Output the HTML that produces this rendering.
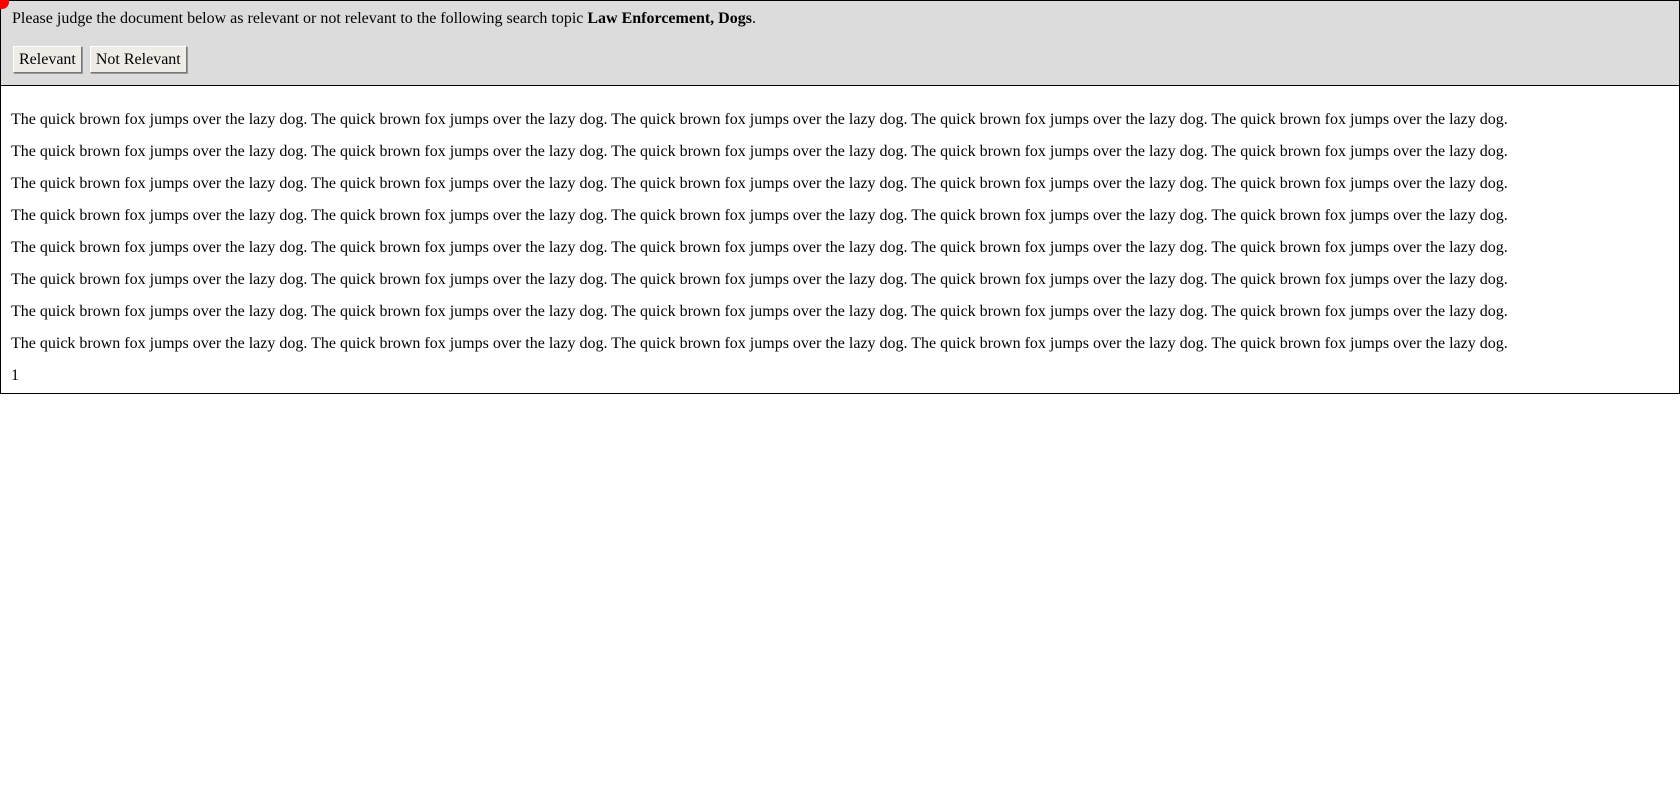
<!DOCTYPE html>
<html><head><meta charset="utf-8"><style>
body{margin:0;width:1680px;height:795px;background:#fff;font-family:"Liberation Serif",serif;font-size:16px;color:#000;position:relative;overflow:hidden}
#hd{position:absolute;left:0;top:0;width:1678px;height:84px;background:#dcdcdc;border:1px solid #000}
#dot{position:absolute;left:-6px;top:-6px;width:14px;height:14px;border-radius:50%;background:#f00}
.t{position:absolute;left:11px;white-space:nowrap;line-height:20px}
#btns{position:absolute;left:12px;top:45px;display:flex;gap:8px}
.b{height:27px;background:#efece7;border:1px solid #fff;border-right-color:#777;border-bottom-color:#777;box-shadow:1px 1px 0 #999;font:16px "Liberation Serif",serif;line-height:25px;padding:0 5px;box-sizing:border-box}
#bd{position:absolute;left:0;top:85px;width:1678px;height:308px;border:1px solid #000;border-top:none}
</style></head><body>
<div id="hd"><div id="dot"></div>
<div class="t" style="top:8px">Please judge the document below as relevant or not relevant to the following search topic <b>Law Enforcement, Dogs</b>.</div>
<div id="btns"><div class="b">Relevant</div><div class="b">Not Relevant</div></div>
</div>
<div id="bd"></div>
<div class="t" style="top:110px">The quick brown fox jumps over the lazy dog. The quick brown fox jumps over the lazy dog. The quick brown fox jumps over the lazy dog. The quick brown fox jumps over the lazy dog. The quick brown fox jumps over the lazy dog.</div>
<div class="t" style="top:142px">The quick brown fox jumps over the lazy dog. The quick brown fox jumps over the lazy dog. The quick brown fox jumps over the lazy dog. The quick brown fox jumps over the lazy dog. The quick brown fox jumps over the lazy dog.</div>
<div class="t" style="top:174px">The quick brown fox jumps over the lazy dog. The quick brown fox jumps over the lazy dog. The quick brown fox jumps over the lazy dog. The quick brown fox jumps over the lazy dog. The quick brown fox jumps over the lazy dog.</div>
<div class="t" style="top:206px">The quick brown fox jumps over the lazy dog. The quick brown fox jumps over the lazy dog. The quick brown fox jumps over the lazy dog. The quick brown fox jumps over the lazy dog. The quick brown fox jumps over the lazy dog.</div>
<div class="t" style="top:238px">The quick brown fox jumps over the lazy dog. The quick brown fox jumps over the lazy dog. The quick brown fox jumps over the lazy dog. The quick brown fox jumps over the lazy dog. The quick brown fox jumps over the lazy dog.</div>
<div class="t" style="top:270px">The quick brown fox jumps over the lazy dog. The quick brown fox jumps over the lazy dog. The quick brown fox jumps over the lazy dog. The quick brown fox jumps over the lazy dog. The quick brown fox jumps over the lazy dog.</div>
<div class="t" style="top:302px">The quick brown fox jumps over the lazy dog. The quick brown fox jumps over the lazy dog. The quick brown fox jumps over the lazy dog. The quick brown fox jumps over the lazy dog. The quick brown fox jumps over the lazy dog.</div>
<div class="t" style="top:334px">The quick brown fox jumps over the lazy dog. The quick brown fox jumps over the lazy dog. The quick brown fox jumps over the lazy dog. The quick brown fox jumps over the lazy dog. The quick brown fox jumps over the lazy dog.</div>
<div class="t" style="top:366px">1</div>
</body></html>
